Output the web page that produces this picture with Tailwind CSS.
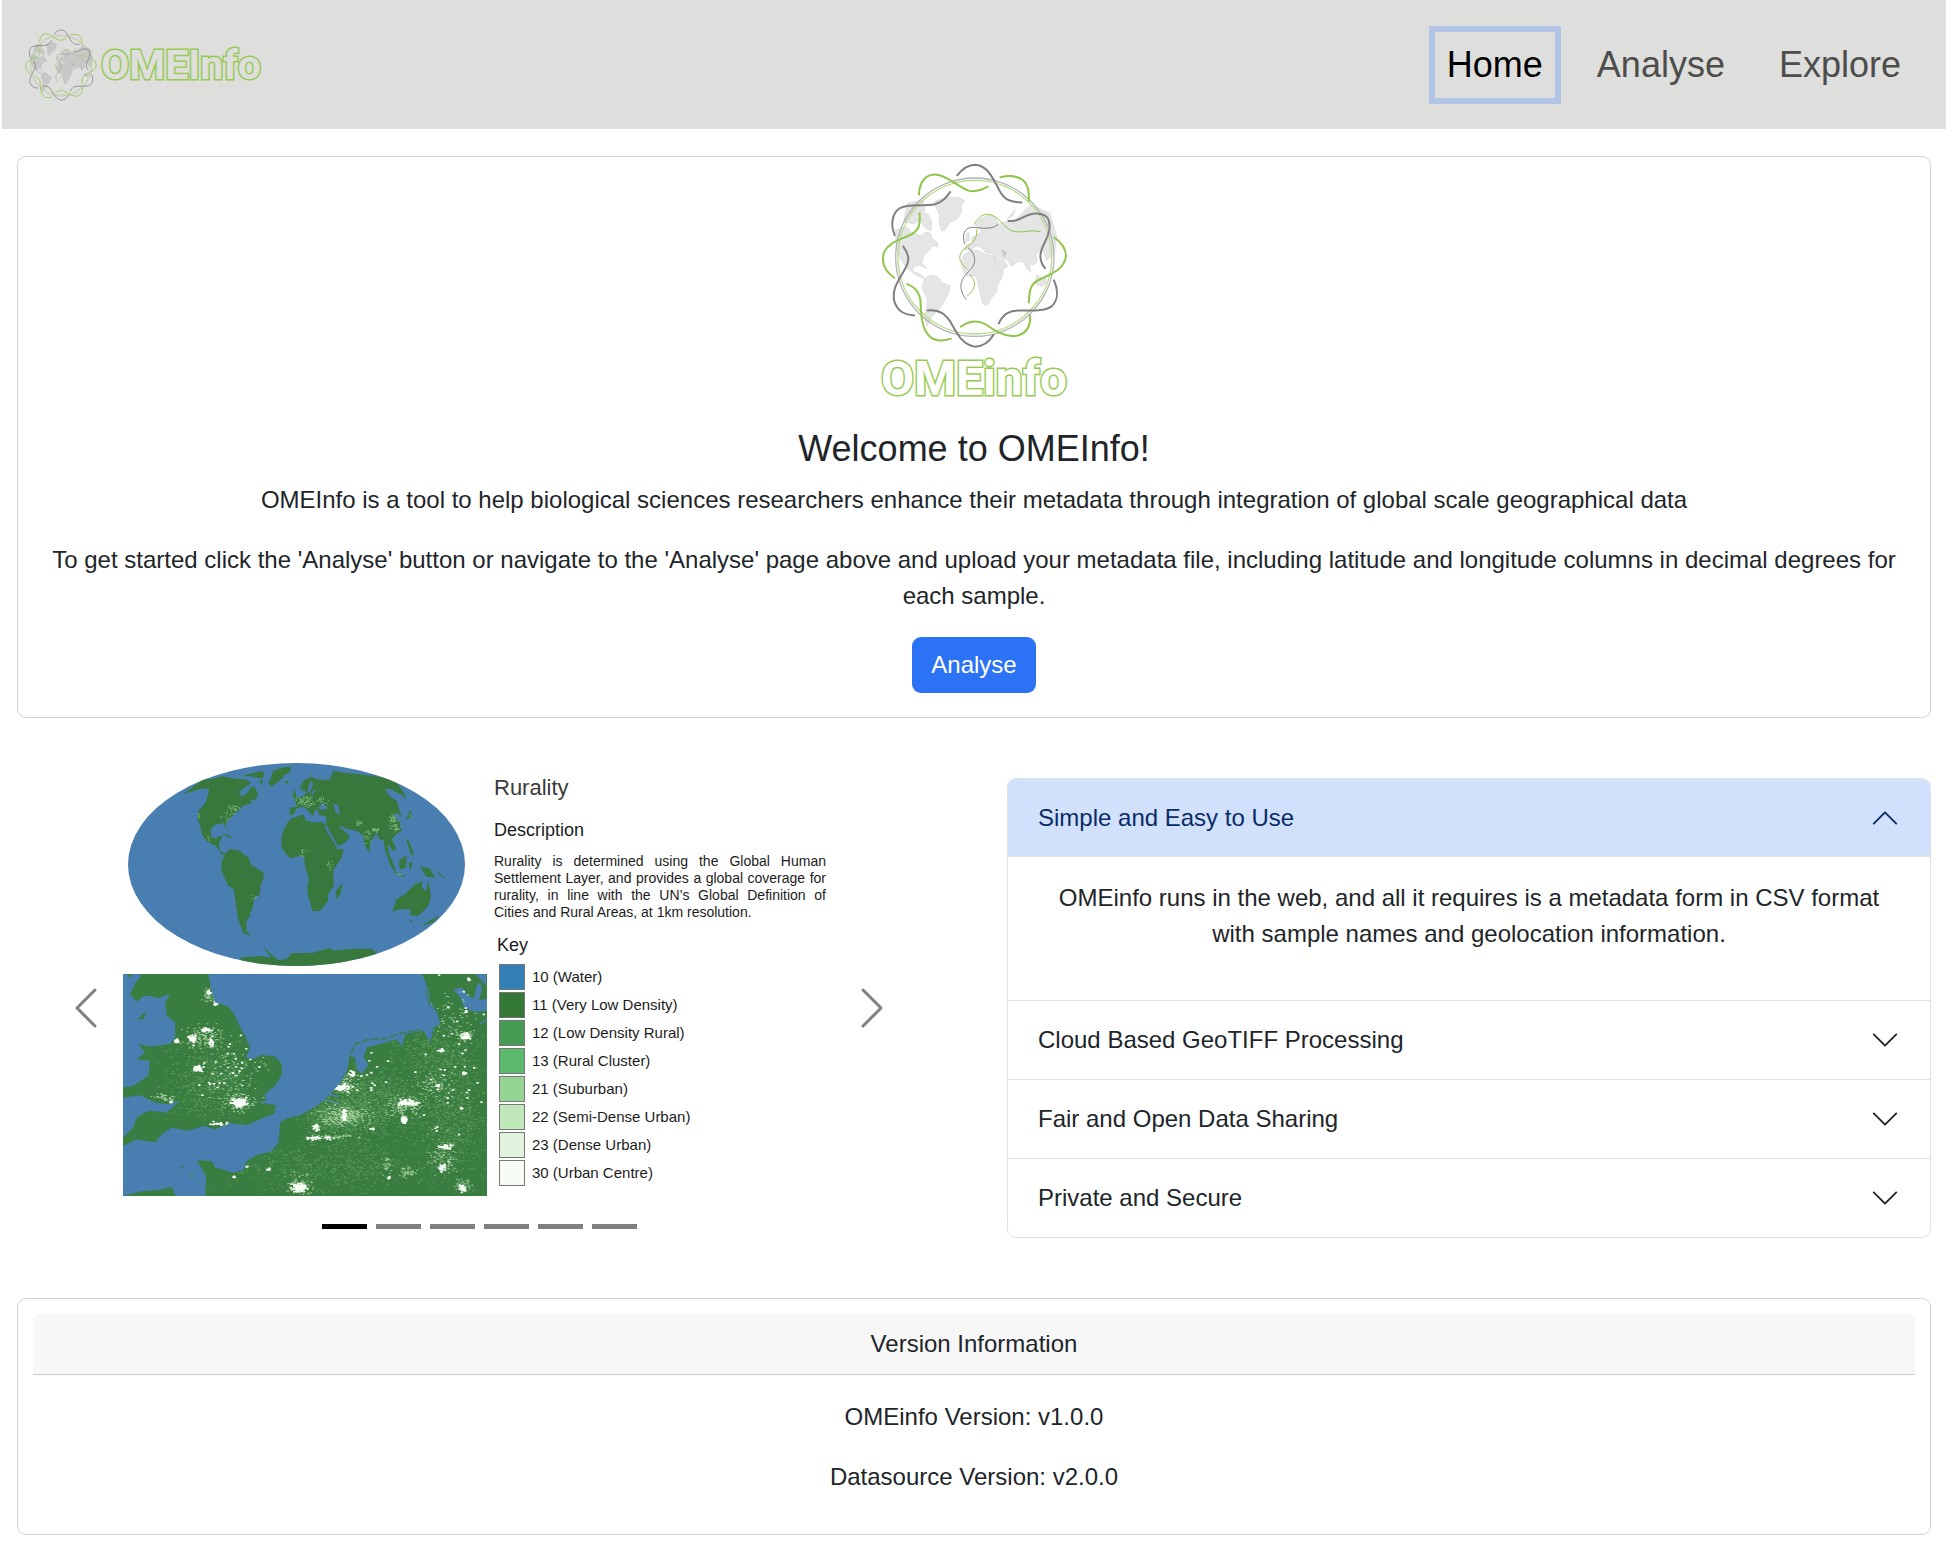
<!DOCTYPE html>
<html lang="en">
<head>
<meta charset="utf-8">
<meta name="viewport" content="width=device-width, initial-scale=1">
<title>OMEInfo</title>
<script src="https://cdn.jsdelivr.net/npm/@tailwindcss/browser@4"></script>
</head>
<body class="bg-white pl-[2px] pr-3 pb-3.5 font-['Liberation_Sans',Arial,sans-serif] text-2xl leading-9 text-[#212529]">

<!-- Shared drawings -->
<svg class="hidden" aria-hidden="true">
  <symbol id="globe" viewBox="62 36 562 562">
    <clipPath id="globe-disc"><circle cx="344" cy="322" r="234"/></clipPath>
    <g clip-path="url(#globe-disc)" fill="#000" fill-opacity=".1" stroke="#000" stroke-opacity=".1" stroke-width="2" stroke-linejoin="round">
      <path d="M222 156C240 143 275 140 295 143L313 152 303 170 305 185 290 208 268 218 255 240 245 244 237 225 238 195 228 175Z"/>
      <path d="M140 160 185 150 195 165 190 188 205 195 215 215 212 243 192 232 180 212 160 222 130 215Z"/>
      <path d="M105 240 140 230 155 250 185 258 195 246 210 250 218 268 232 278 234 290 214 288 210 300 195 310 187 330 185 340 201 356 178 346 160 350 158 365 180 372 192 386 170 378 140 355 122 330 108 300Z"/>
      <path d="M192 388C212 368 235 376 242 396L270 408 268 425 255 450 235 480 215 500 200 530 192 500 200 470 200 445 185 415Z"/>
      <path d="M312 315 335 300 358 303 372 312 385 315 400 318 408 345 418 364 431 364 425 385 412 405 410 425 390 450 386 463 375 468 367 460 358 425 352 395 345 378 320 380 305 355 303 335Z"/>
      <path d="M314 300 318 284 338 284 335 262 350 258 365 242 345 226 358 208 385 195 405 200 415 222 440 215 460 214 480 195 500 175 515 165 570 190 590 260 583 310 560 332 547 298 528 312 532 335 522 345 508 343 512 368 498 352 488 335 472 336 455 350 440 328 430 328 443 350 420 364 405 330 400 312 378 310 368 298 352 288 332 300Z"/>
      <path d="M440 208 466 178 458 198ZM318 250 326 248 328 272 316 275ZM524 402 530 375 548 388 556 378 560 402 545 410ZM425 300 440 308 432 322Z"/>
    </g>
    <circle cx="344" cy="322" r="238" fill="none" stroke="#b3b3b8" stroke-width="4"/>
    <circle cx="344" cy="322" r="231" fill="none" stroke="#b5db85" stroke-width="4"/>
    <g fill="none" stroke-width="6" stroke-linecap="round">
      <g stroke="#808084">
        <path d="M291 76C312 50 330 44 345 44 380 46 395 80 410 106 430 150 445 155 484 158"/>
        <path d="M103 256C90 225 95 190 118 175 145 160 180 170 225 163 250 155 260 140 270 126"/>
        <path d="M129 290C150 320 148 335 130 365 110 400 95 420 102 455 112 485 130 494 162 497"/>
        <path d="M202 482C240 478 255 495 270 515 290 550 305 585 345 591 375 590 390 572 400 556"/>
        <path d="M416 521C430 490 450 482 480 482 520 483 555 484 575 470 595 450 595 420 582 392"/>
        <path d="M445 213C485 218 490 190 530 191 560 193 572 205 568 240 560 280 540 290 541 322 543 340 548 348 555 355"/>
      </g>
      <g stroke="#8fc549">
        <path d="M176 134C178 85 205 72 230 74 265 78 290 110 325 122 345 127 365 120 383 110"/>
        <path d="M421 82C440 77 465 76 485 88 505 102 508 125 506 152"/>
        <path d="M178 190C180 225 178 240 150 255 120 270 90 275 72 305 60 340 75 365 102 384"/>
        <path d="M141 403C165 412 180 430 181 460 182 500 185 530 200 550 215 575 245 577 272 567"/>
        <path d="M302 531C325 515 350 510 375 523 400 540 425 558 460 560 500 555 512 530 510 498"/>
        <path d="M506 458C508 420 510 400 545 386 580 370 615 355 618 317 617 295 600 275 583 263"/>
      </g>
      <g stroke-width="3">
        <path stroke="#808084" d="M313 282C305 255 312 235 335 232 370 235 395 240 413 224M324 294C345 310 350 335 335 355 310 380 285 405 317 448"/>
        <path stroke="#8fc549" d="M343 223C355 200 370 190 390 194 415 200 430 230 455 243 480 252 510 238 540 245M350 240C352 270 335 280 315 295 295 310 290 335 320 356M330 376C348 395 350 415 322 438"/>
      </g>
    </g>
  </symbol>
  <symbol id="chevron-down" viewBox="0 0 16 16"><path d="M2 5 8 11 14 5" fill="none" stroke="currentColor" stroke-width="1" stroke-linecap="round" stroke-linejoin="round"/></symbol>
  <symbol id="chevron-left" viewBox="0 0 16 16"><path d="M11 2 5 8 11 14" fill="none" stroke="currentColor" stroke-width="1" stroke-linecap="round" stroke-linejoin="round"/></symbol>
</svg>

<header class="flex h-[129px] items-center justify-between bg-[#dededc] pl-[23px] pr-[33px]">
  <a href="#" class="flex items-center gap-1" aria-label="OMEInfo home">
    <svg class="size-[72px]"><use href="#globe"/></svg>
    <span class="font-['Roboto',sans-serif] text-[41px] font-bold text-[#dededc] [-webkit-text-stroke:3px_#96ca52] [paint-order:stroke_fill]">OMEInfo</span>
  </a>
  <nav class="flex gap-[30px] text-4xl leading-[54px] text-[#4d4d4c]">
    <a href="#" class="px-3 py-1.5 text-black ring-6 ring-[#b1c4e5]" aria-current="page">Home</a>
    <a href="#analyse" class="px-3 py-1.5">Analyse</a>
    <a href="#explore" class="px-3 py-1.5">Explore</a>
  </nav>
</header>

<main class="px-[15px] pt-[27px]">
  <section class="flex flex-col items-center rounded-[9px] border border-[#d2d2d2] px-6 pt-[5px] pb-6 text-center">
    <svg class="size-[187px]" role="img" aria-label="OMEinfo globe"><use href="#globe"/></svg>
    <div class="font-['Roboto',sans-serif] text-5xl leading-[60px] font-bold text-white [-webkit-text-stroke:3px_#96ca52] [paint-order:stroke_fill]">OMEinfo</div>
    <h1 class="mt-[18px] mb-3 text-4xl leading-[43px]">Welcome to OMEInfo!</h1>
    <p class="mb-6">OMEInfo is a tool to help biological sciences researchers enhance their metadata through integration of global scale geographical data</p>
    <p class="mb-[23px]">To get started click the 'Analyse' button or navigate to the 'Analyse' page above and upload your metadata file, including latitude and longitude columns in decimal degrees for each sample.</p>
    <button type="button" class="rounded-[9px] bg-[#2c72f4] px-[19px] py-2.5 text-white">Analyse</button>
  </section>

  <div class="my-[30px] grid grid-cols-2 items-center gap-[66px]">
    <section class="relative pt-[15px] pb-[39px]" aria-label="Datasets">
      <div class="flex gap-[7px] pl-[106px] text-[#1c1c1c]">
        <div class="flex w-[364px] shrink-0 flex-col gap-2">
          <svg class="ml-[5px] h-[203px] w-[337px]" viewBox="85 72 1010 608" preserveAspectRatio="none" role="img" aria-label="World rurality map">
            <clipPath id="world-edge"><ellipse cx="590" cy="376" rx="505" ry="304"/></clipPath>
            <clipPath id="world-land"><use href="#world-shape"/></clipPath>
            <g clip-path="url(#world-edge)">
              <rect x="85" y="72" width="1010" height="608" fill="#487eb0"/>
              <path id="world-shape" fill="#38783d" d="M250 165 310 122 340 120 365 112 400 118 440 122 455 132 432 148 418 158 425 172 440 165 450 150 462 140 475 165 470 180 448 185 460 192 430 200 418 213 405 225 390 240 378 250 382 270 370 252 345 258 333 270 335 292 350 300 358 290 368 292 358 310 360 335 378 345 366 347 350 322 322 306 308 290 302 262 293 240 296 215 318 190 325 165 328 148 300 150ZM425 112 448 104 485 96 495 102 488 118 470 116 455 112ZM478 128 490 120 486 138ZM520 96 550 85 575 83 570 100 555 108 545 120 515 143 505 132 515 112ZM553 127 568 125 562 135ZM366 282 385 288 400 298 382 294ZM375 345 390 330 422 335 430 346 445 352 455 378 492 400 490 420 482 440 480 465 463 480 458 510 450 520 452 530 440 545 440 575 458 593 430 580 415 540 410 505 402 450 385 440 365 395 365 370ZM575 238 612 226 618 245 645 250 665 248 678 256 700 300 712 330 732 330 725 355 700 395 702 440 685 465 685 485 660 515 638 516 625 470 622 440 628 420 615 380 614 355 600 350 570 358 545 325 545 290 560 255ZM728 430 722 465 708 480 708 455ZM570 228 570 205 590 203 585 182 610 170 622 160 600 148 610 125 635 113 655 122 690 122 700 95 740 102 800 108 850 115 890 132 905 150 920 178 900 165 870 150 855 150 868 170 890 185 905 235 892 222 880 228 900 250 905 275 885 290 875 300 890 330 880 335 862 312 868 345 885 385 888 405 870 375 855 330 852 305 838 300 830 282 812 310 808 340 795 320 790 290 770 275 740 270 718 258 735 278 750 290 742 305 712 325 695 290 678 250 680 232 658 228 654 214 645 212 640 232 625 215 610 203 590 208 580 228ZM582 150 594 178 578 178ZM930 210 936 234 915 242 925 230ZM897 365 920 348 918 385 900 390ZM960 382 990 388 1005 415 980 412ZM885 400 915 408 912 412 888 406ZM918 300 925 302 942 345 935 350ZM926 372 938 368 932 395ZM1005 390 1040 420 1020 408ZM890 480 915 465 945 435 968 427 965 445 978 455 985 424 993 470 985 500 955 530 930 528 932 510 900 510 878 517ZM928 545 938 541 933 550ZM962 561 1018 528 1000 550ZM420 655 480 650 515 655 487 618 520 650 535 662 560 660 575 642 640 640 690 627 700 634 760 628 815 628 830 642 760 690 440 690Z"/>
              <path fill="#487eb0" d="M655 207 668 192 686 208 665 212ZM700 193 714 198 720 226 708 222ZM634 160 648 148 640 168ZM632 125 622 155 630 160 640 135Z"/>
              <path fill="none" stroke="#487eb0" stroke-width="6" d="M676 262 714 324M722 264 742 276"/>
              <path id="world-dots" clip-path="url(#world-land)" fill="none" stroke="#9bd393" stroke-width="3" opacity=".7"/>
            </g>
          </svg>
          <svg class="h-[222px] w-[364px]" viewBox="69 45 1091 665" preserveAspectRatio="none" role="img" aria-label="Rurality around the North Sea">
            <clipPath id="sea-land"><use href="#sea-shape"/></clipPath>
            <rect x="69" y="45" width="1091" height="665" fill="#487eb0"/>
            <path id="sea-shape" fill="#3a7d40" d="M125 45 325 45 333 90 345 130 385 142 405 170 415 195 435 230 450 265 438 295 460 300 485 288 525 292 545 315 545 345 525 380 492 405 500 425 470 428 527 438 523 462 480 480 440 498 390 492 345 510 310 500 260 515 215 505 185 525 165 550 110 540 69 560 69 535 100 505 110 475 145 455 200 460 240 425 205 435 165 430 120 408 69 415 69 385 100 380 145 350 150 305 110 300 135 280 115 255 150 262 210 255 225 235 225 190 200 170 195 130 210 105 175 118 150 110 130 112 110 128 90 105 105 75ZM112 182 138 155 132 178ZM80 45 98 45 90 57ZM965 45 1160 45 1160 710 315 710 318 650 290 603 335 605 345 625 400 640 430 632 440 605 470 588 515 575 535 550 540 490 560 478 600 468 650 440 690 405 725 365 742 330 748 290 765 295 770 330 785 345 805 315 790 295 800 265 850 252 890 240 905 262 915 225 970 215 990 250 1000 205 1020 195 1010 160 990 130 985 90ZM69 710 130 695 175 692 215 683 228 710ZM240 622 250 622 246 630ZM270 648 282 648 276 656Z"/>
            <path fill="#487eb0" d="M1058 92 1085 85 1105 112 1122 118 1128 82 1140 70 1145 95 1135 125 1160 118 1160 155 1120 158 1090 142 1080 115ZM1125 45 1156 45 1158 80 1140 60Z"/>
            <path fill="none" stroke="#3a7d40" stroke-width="4" stroke-dasharray="22 6" d="M752 285 765 255 800 242 860 238 900 222 960 212M978 60 980 105 990 145"/>
            <path fill="none" stroke="#487eb0" stroke-width="5" d="M668 420 720 435M680 405 715 412M1140 195 1160 180"/>
            <g clip-path="url(#sea-land)" fill="none" stroke-linecap="round">
              <path id="sea-grain" stroke="#6cab69" stroke-width="3" opacity=".6"/>
              <path id="sea-mid" stroke="#b5dcae" stroke-width="3" opacity=".8"/>
              <path id="sea-city" stroke="#f7fcf5" stroke-width="5"/>
            </g>
          </svg>
        </div>
        <div class="w-[332px] shrink-0 pt-[13px]">
          <h2 class="text-[22px] leading-6 text-[#3a3a3a]">Rurality</h2>
          <h3 class="mt-5 text-lg leading-5">Description</h3>
          <p class="mt-[13px] text-justify text-sm leading-[17px]">Rurality is determined using the Global Human Settlement Layer, and provides a global coverage for rurality, in line with the UN’s Global Definition of Cities and Rural Areas, at 1km resolution.</p>
          <h3 class="mt-3.5 ml-[3px] text-lg leading-5">Key</h3>
          <ul class="mt-[9px] ml-[5px] flex flex-col gap-0.5 text-[15px] leading-[26px]">
            <li class="flex gap-[7px]"><span class="size-[26px] border border-[#777] bg-[#3380b4]"></span>10 (Water)</li>
            <li class="flex gap-[7px]"><span class="size-[26px] border border-[#777] bg-[#347835]"></span>11 (Very Low Density)</li>
            <li class="flex gap-[7px]"><span class="size-[26px] border border-[#777] bg-[#469c53]"></span>12 (Low Density Rural)</li>
            <li class="flex gap-[7px]"><span class="size-[26px] border border-[#777] bg-[#5dba6d]"></span>13 (Rural Cluster)</li>
            <li class="flex gap-[7px]"><span class="size-[26px] border border-[#777] bg-[#95d593]"></span>21 (Suburban)</li>
            <li class="flex gap-[7px]"><span class="size-[26px] border border-[#777] bg-[#bfe7ba]"></span>22 (Semi-Dense Urban)</li>
            <li class="flex gap-[7px]"><span class="size-[26px] border border-[#777] bg-[#e1f3dd]"></span>23 (Dense Urban)</li>
            <li class="flex gap-[7px]"><span class="size-[26px] border border-[#777] bg-[#f7fcf5]"></span>30 (Urban Centre)</li>
          </ul>
        </div>
      </div>
      <div class="mt-7 flex justify-center gap-[9px]">
        <button type="button" class="h-[5px] w-[45px] bg-black" aria-label="Slide 1" aria-current="true"></button>
        <button type="button" class="h-[5px] w-[45px] bg-[#808080]" aria-label="Slide 2"></button>
        <button type="button" class="h-[5px] w-[45px] bg-[#808080]" aria-label="Slide 3"></button>
        <button type="button" class="h-[5px] w-[45px] bg-[#808080]" aria-label="Slide 4"></button>
        <button type="button" class="h-[5px] w-[45px] bg-[#808080]" aria-label="Slide 5"></button>
        <button type="button" class="h-[5px] w-[45px] bg-[#808080]" aria-label="Slide 6"></button>
      </div>
      <button type="button" class="absolute inset-y-0 left-0 flex w-[15%] items-center justify-center text-[#808080]" aria-label="Previous"><svg class="size-12"><use href="#chevron-left"/></svg></button>
      <button type="button" class="absolute inset-y-0 right-0 flex w-[15%] items-center justify-center text-[#808080]" aria-label="Next"><svg class="size-12 rotate-180"><use href="#chevron-left"/></svg></button>
    </section>

    <section class="divide-y divide-[#dee2e6] overflow-hidden rounded-[9px] border border-[#dee2e6]">
      <div>
        <h2><button type="button" aria-expanded="true" class="flex h-[78px] w-full items-center justify-between border-b border-[#dee2e6] bg-[#d1e1fc] px-[30px] text-[#0a2b66]">Simple and Easy to Use<svg class="size-[30px] rotate-180"><use href="#chevron-down"/></svg></button></h2>
        <p class="px-[30px] pt-[23px] pb-12 text-center">OMEinfo runs in the web, and all it requires is a metadata form in CSV format with sample names and geolocation information.</p>
      </div>
      <h2><button type="button" aria-expanded="false" class="flex h-[78px] w-full items-center justify-between px-[30px]">Cloud Based GeoTIFF Processing<svg class="size-[30px]"><use href="#chevron-down"/></svg></button></h2>
      <h2><button type="button" aria-expanded="false" class="flex h-[78px] w-full items-center justify-between px-[30px]">Fair and Open Data Sharing<svg class="size-[30px]"><use href="#chevron-down"/></svg></button></h2>
      <h2><button type="button" aria-expanded="false" class="flex h-[78px] w-full items-center justify-between px-[30px]">Private and Secure<svg class="size-[30px]"><use href="#chevron-down"/></svg></button></h2>
    </section>
  </div>

  <section class="rounded-[9px] border border-[#d2d2d2] p-[15px] text-center">
    <h2 class="rounded-t-[7px] border-b border-[#cdcdcd] bg-[#f7f7f7] py-3">Version Information</h2>
    <div class="flex flex-col gap-6 py-6">
      <p>OMEinfo Version: v1.0.0</p>
      <p>Datasource Version: v2.0.0</p>
    </div>
  </section>
</main>

<script>
  // Repeatable pseudo-random numbers, so the population dots never move.
  let seed = 7;
  const rnd = () => (seed = (seed * 16807) % 2147483647) / 2147483647;
  const near = () => (rnd() + rnd() + rnd() - 1.5) / 1.5;
  // Each cluster: x, y, horizontal spread, vertical spread, dot count.
  const dots = (id, size, clusters) => {
    let d = '';
    for (const [x, y, sx, sy, n] of clusters)
      for (let i = 0; i < n; i++) d += `M${Math.round(x + near() * sx)} ${Math.round(y + near() * sy)}h${size}`;
    document.getElementById(id).setAttribute('d', d);
  };
  dots('world-dots', 3, [[610, 185, 40, 25, 70], [650, 185, 50, 30, 30], [405, 210, 30, 20, 35], [385, 235, 30, 25, 25], [878, 235, 16, 18, 40], [885, 262, 25, 28, 50], [825, 272, 18, 10, 35], [775, 252, 14, 12, 18], [800, 290, 20, 40, 25], [612, 345, 20, 20, 14], [685, 380, 15, 20, 14], [465, 475, 15, 15, 8], [900, 406, 18, 5, 14], [296, 225, 6, 25, 8], [325, 295, 15, 10, 6], [930, 232, 10, 10, 8]]);
  dots('sea-grain', 3, [[800, 430, 260, 150, 1100], [330, 370, 190, 170, 650], [1050, 450, 140, 320, 900], [700, 620, 420, 110, 600], [1000, 280, 180, 120, 350], [730, 470, 150, 60, 500]]);
  dots('sea-mid', 3, [[730, 470, 110, 45, 260], [415, 430, 65, 45, 110], [310, 235, 90, 55, 130], [910, 440, 80, 50, 130], [740, 370, 50, 50, 80], [600, 680, 50, 45, 90], [1010, 380, 90, 60, 80], [190, 415, 50, 18, 40], [1030, 590, 60, 90, 90], [920, 640, 40, 25, 40], [1095, 230, 40, 30, 50], [325, 110, 25, 35, 40], [860, 620, 25, 45, 25], [1085, 680, 40, 30, 40], [700, 532, 120, 12, 60], [400, 340, 140, 130, 90], [1060, 180, 90, 130, 60]]);
  dots('sea-city', 3, [[415, 430, 32, 18, 90], [275, 240, 20, 14, 50], [318, 213, 18, 10, 30], [292, 330, 18, 14, 45], [228, 246, 10, 8, 14], [325, 100, 14, 8, 14], [346, 134, 9, 6, 10], [333, 250, 12, 20, 14], [725, 385, 26, 15, 45], [755, 345, 12, 16, 16], [920, 430, 48, 12, 80], [910, 483, 13, 16, 35], [597, 685, 32, 18, 80], [1095, 232, 18, 14, 40], [1020, 275, 16, 8, 12], [1035, 562, 28, 10, 24], [1025, 625, 15, 18, 20], [1085, 688, 14, 16, 24], [1090, 343, 12, 8, 12], [732, 470, 10, 30, 30], [645, 505, 16, 12, 16], [660, 537, 60, 8, 26], [815, 510, 10, 6, 10], [400, 653, 6, 4, 5], [503, 630, 5, 5, 6], [438, 622, 5, 4, 5], [210, 430, 8, 6, 8], [350, 495, 50, 8, 18], [1103, 62, 8, 8, 8], [1097, 158, 6, 6, 6], [1012, 380, 8, 8, 8], [865, 655, 5, 6, 5], [1083, 447, 5, 5, 5], [380, 330, 150, 150, 30], [1050, 350, 150, 320, 40], [820, 350, 130, 110, 16]]);
</script>
</body>
</html>
